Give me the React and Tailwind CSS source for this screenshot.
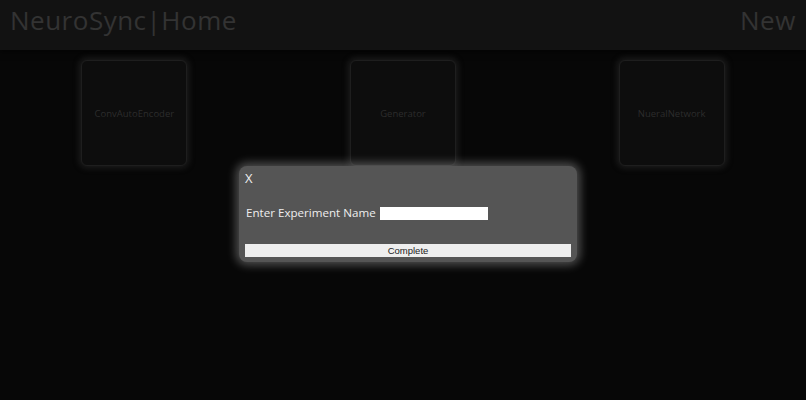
export default function App() {
  const cards = ["ConvAutoEncoder", "Generator", "NueralNetwork"];
  return (
    <div className="relative w-[806px] h-[400px] bg-[#070707] overflow-hidden" style={{ fontFamily: '"Open Sans", sans-serif' }}>
      <header className="h-[50px] bg-[#121212] flex items-start justify-between px-[10px] pt-[2px] shadow-[0_2px_6px_rgba(0,0,0,0.6)]">
        <span className="text-[26px] leading-[36px] text-[#333333] tracking-[0.5px]">NeuroSync|Home</span>
        <span className="text-[26px] leading-[36px] text-[#333333] tracking-[0.6px]">New</span>
      </header>
      <div className="grid grid-cols-3 pt-[10px]">
        {cards.map((c) => (
          <div key={c} className="flex justify-center">
            <div className="w-[106px] h-[106px] rounded-[6px] bg-[#0d0d0d] border border-[#1e1e1e] shadow-[0_0_6px_2px_rgba(70,70,70,0.35)] flex items-center justify-center">
              <span className="text-[9.5px] text-[#2c2c2c] mt-[2px]">{c}</span>
            </div>
          </div>
        ))}
      </div>
      <div className="absolute left-[239px] top-[166px] w-[338px] h-[96px] bg-[#555555] rounded-[8px] shadow-[0_0_10px_3px_rgba(255,255,255,0.3)] px-[6px] pt-[4px] flex flex-col">
        <span className="text-[13px] text-[#eeeeee] leading-[16px]">X</span>
        <div className="flex items-center mt-[19px] gap-[4px]">
          <span className="text-[11.6px] text-[#eeeeee] leading-[16px] pl-px">Enter Experiment Name</span>
          <input className="w-[108px] h-[13px] bg-white outline-none border-0" />
        </div>
        <button className="mt-[23px] h-[13px] w-full bg-[#eeeeee] text-[9.5px] leading-[13px] text-[#222] flex items-center justify-center" style={{ fontFamily: '"Liberation Sans", Arial, sans-serif' }}>Complete</button>
      </div>
    </div>
  );
}
